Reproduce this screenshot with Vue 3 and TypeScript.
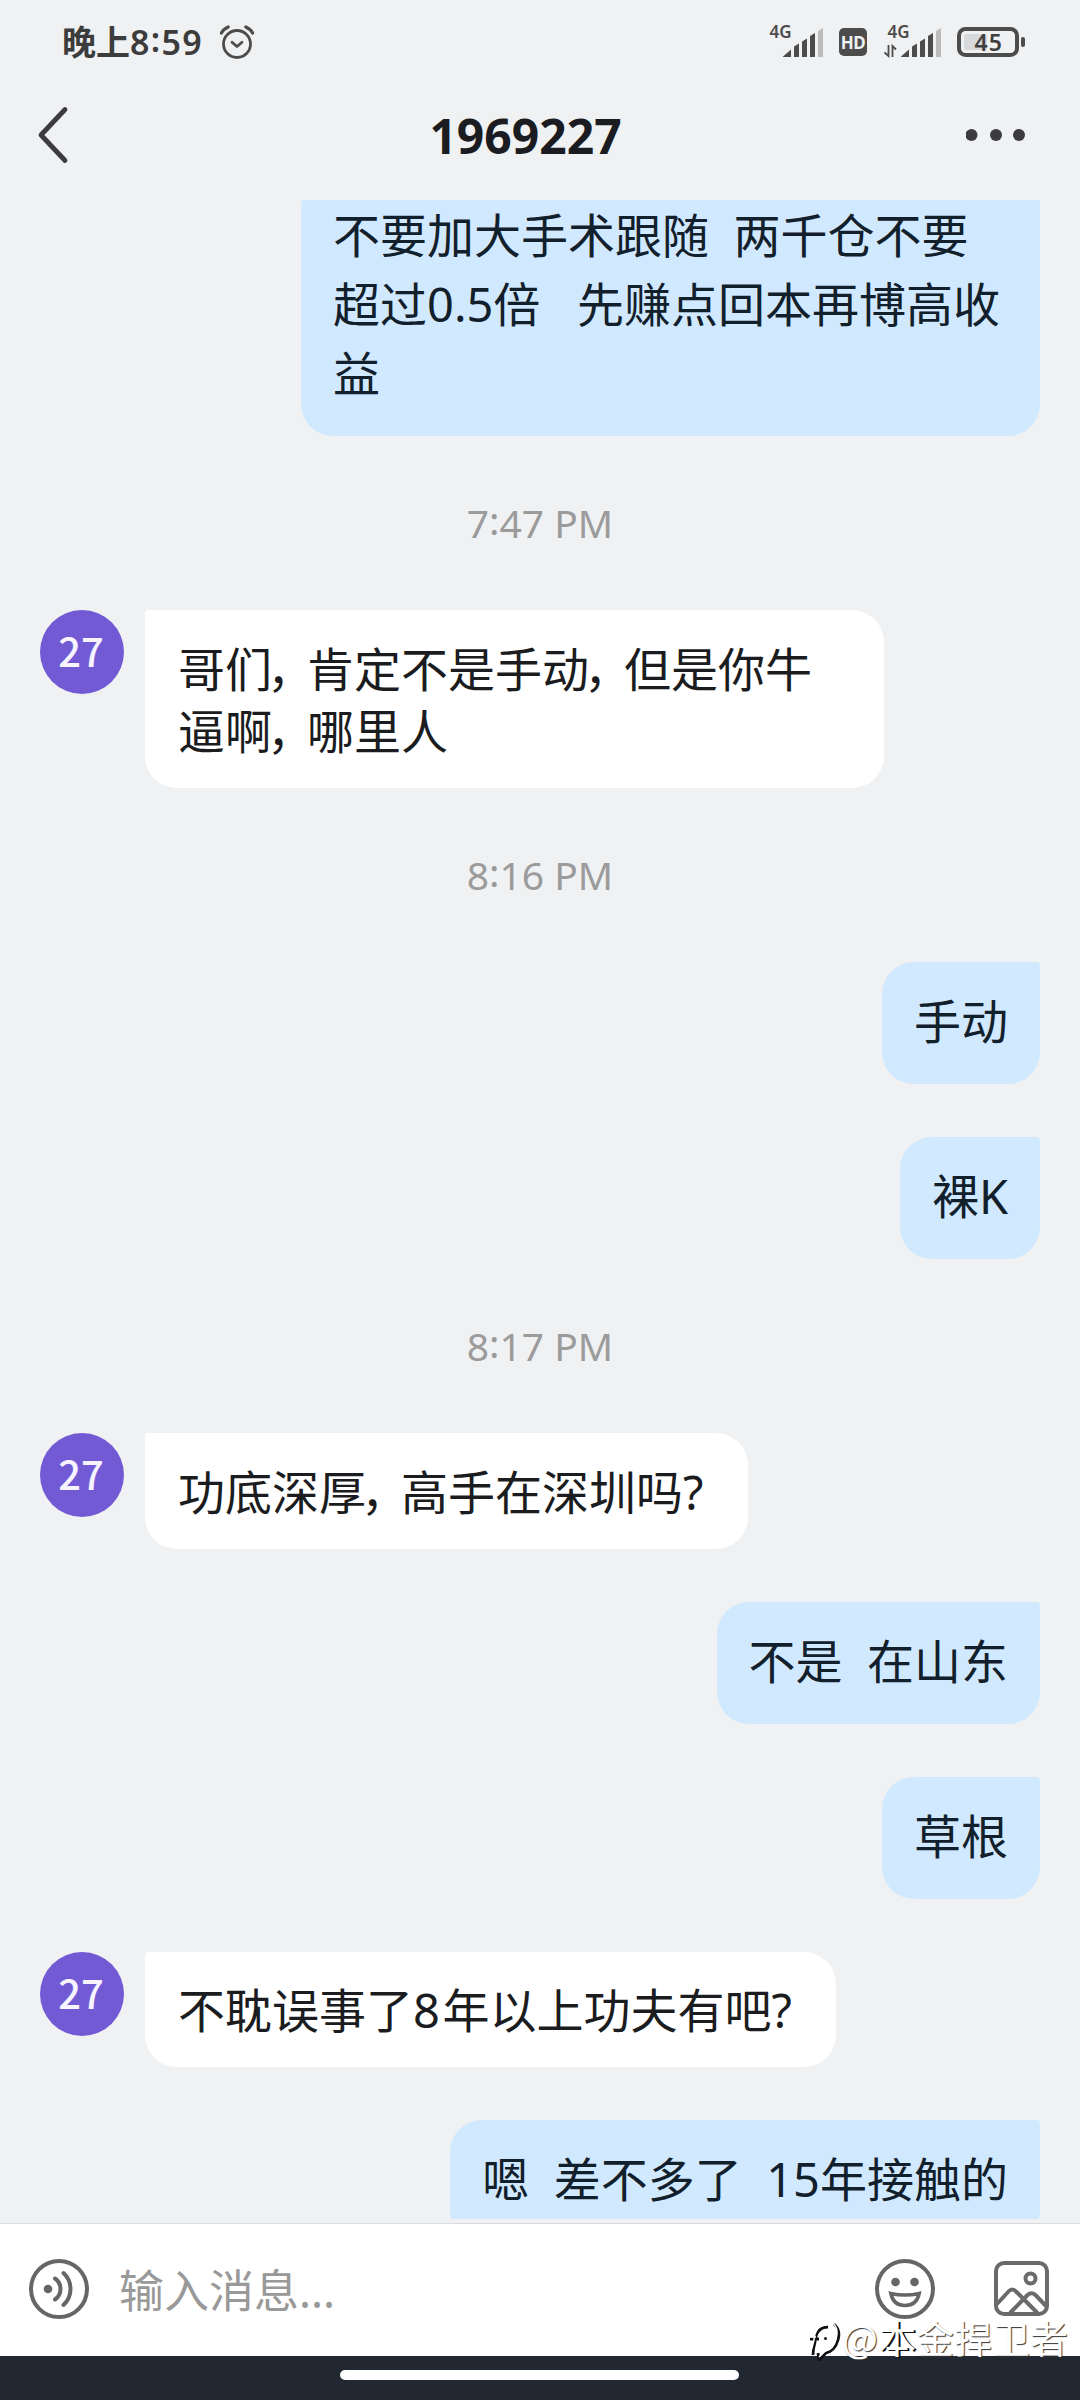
<script setup lang="ts">
interface Message {
  kind: 'sent' | 'received'
  text: string
  first?: boolean
  full?: boolean
}
interface Stamp {
  kind: 'time'
  hour: string
  rest: string
}
type Row = Message | Stamp

const rows: Row[] = [
  { kind: 'sent', first: true, full: true, text: '不要加大手术跟随  两千仓不要\n超过0.5倍   先赚点回本再博高收\n益' },
  { kind: 'time', hour: '7', rest: '47 PM' },
  { kind: 'received', full: true, text: '哥们\uff0c肯定不是手动\uff0c但是你牛\n逼啊\uff0c哪里人' },
  { kind: 'time', hour: '8', rest: '16 PM' },
  { kind: 'sent', text: '手动' },
  { kind: 'sent', text: '裸K' },
  { kind: 'time', hour: '8', rest: '17 PM' },
  { kind: 'received', text: '功底深厚\uff0c高手在深圳吗?' },
  { kind: 'sent', text: '不是  在山东' },
  { kind: 'sent', text: '草根' },
  { kind: 'received', text: '不耽误事了8年以上功夫有吧?' },
  { kind: 'sent', text: '嗯  差不多了  15年接触的' },
]

// Some marks take a width of their own, so the text is split around them.
const pieces = (text: string): string[] => text.split(/(\uff0c|\?|8)/).filter(Boolean)
const marks: Record<string, string> = { '\uff0c': 'comma', '?': 'question', '8': 'digit' }
</script>

<template>
  <div class="screen">
    <header class="status">
      <span class="clock">晚上<span class="digits">8<span class="colon">:</span>59</span></span>
      <svg class="alarm" width="36" height="36" viewBox="0 0 36 36" fill="none" stroke="#4c4c4c" stroke-linecap="round">
        <circle cx="18" cy="20" r="13.5" stroke-width="2.8" />
        <path d="M13 18.2l5 4.3 5-4.3" stroke-width="2.8" stroke-linejoin="round" />
        <path d="M2.4 9Q4.6 5 9.2 3M33.6 9Q31.4 5 26.8 3" stroke-width="3.2" />
      </svg>
      <div class="indicators">
        <svg width="56" height="46" viewBox="0 -6 56 46" class="net">
          <text x="0.5" y="13" class="net-label">4G</text>
          <path d="M14 31.5L22 24.5V32H14Z M25 21.500L30 18.500V32H25Z M33 16.500L38 13.500V32H33Z M41 11L46 8V32H41Z" fill="#4c4c4c" />
          <path d="M49 6L54 3V32H49Z" fill="#bcbcbd" />
        </svg>
        <span class="hd">HD</span>
        <svg width="60" height="46" viewBox="0 -6 60 46" class="net second">
          <text x="4.500" y="13" class="net-label">4G</text>
          <path d="M5.500 20V31L1.500 27.500M9.500 32V21L13 24.500" fill="none" stroke="#4c4c4c" stroke-width="1.8" />
          <path d="M18 31.5L26 24.5V32H18Z M29 21.500L34 18.500V32H29Z M37 16.500L42 13.500V32H37Z M45 11L50 8V32H45Z" fill="#4c4c4c" />
          <path d="M53 6L58 3V32H53Z" fill="#bcbcbd" />
        </svg>
        <svg width="70" height="32" viewBox="0 0 70 32" class="battery">
          <rect x="2" y="3" width="58" height="26" rx="6.500" fill="none" stroke="#4c4c4c" stroke-width="4" />
          <rect x="7" y="8" width="23" height="16" rx="2" fill="#d8d9da" />
          <rect x="64" y="11" width="4" height="10" rx="2" fill="#4c4c4c" />
          <text x="17.500" y="24.500" class="level">45</text>
        </svg>
      </div>
    </header>

    <nav class="titlebar">
      <svg width="32" height="60" viewBox="0 0 32 60" fill="none" stroke="#3c3c3e" stroke-width="4.800" stroke-linecap="round" stroke-linejoin="round">
        <path d="M28 4.500L4 30l24 25.500" />
      </svg>
      <h1>1969227</h1>
      <svg width="60" height="14" viewBox="0 0 60 14" fill="#3c3c3e">
        <circle cx="5.500" cy="7" r="6" /><circle cx="30" cy="7" r="6" /><circle cx="53" cy="7" r="6" />
      </svg>
    </nav>

    <main class="chat">
      <template v-for="(row, i) in rows" :key="i">
        <div v-if="row.kind === 'time'" class="time">{{ row.hour }}<span class="colon">:</span>{{ row.rest }}</div>
        <div v-else class="row" :class="[row.kind, { first: row.first, full: row.full }]">
          <span v-if="row.kind === 'received'" class="avatar">27</span>
          <div class="bubble"><template v-for="(piece, j) in pieces(row.text)" :key="j"><span v-if="marks[piece]" :class="marks[piece]">{{ piece }}</span><template v-else>{{ piece }}</template></template></div>
        </div>
      </template>
    </main>

    <footer class="composer">
      <svg width="60" height="60" viewBox="0 0 60 60" fill="none" stroke="#666" stroke-width="4" stroke-linecap="round">
        <circle cx="30" cy="30" r="28" />
        <circle cx="19" cy="30" r="4.300" fill="#666" stroke="none" />
        <path d="M26 19.500A12.800 12.800 0 0 1 26 40.500M34.500 14A21.800 21.800 0 0 1 34.500 46" />
      </svg>
      <span class="placeholder">输入消息...</span>
      <svg width="60" height="60" viewBox="0 0 60 60" fill="none" stroke="#666" stroke-width="4">
        <circle cx="30" cy="30" r="28" />
        <circle cx="20.500" cy="23" r="4.300" fill="#666" stroke="none" />
        <circle cx="39.500" cy="23" r="4.300" fill="#666" stroke="none" />
        <path d="M15.800 34.400Q30 37.500 44.200 34.400C42.500 42.500 37 46.500 30 46.500S17.500 42.500 15.800 34.400Z" stroke-width="3.600" />
      </svg>
      <svg class="photo" width="56" height="56" viewBox="0 0 56 56" fill="none" stroke="#6a6a6a" stroke-width="4">
        <rect x="2" y="2" width="51" height="51" rx="8" />
        <circle cx="36.500" cy="17.500" r="5" />
        <path d="M3 43L14.500 30.500Q18.300 26.500 22 30.500L43.500 52M16 52L33.500 34Q37.500 30.500 41.500 34L52 45" />
      </svg>
    </footer>

    <div class="gesture"><span class="pill"></span></div>

    <div class="watermark">
      <svg width="34" height="46" viewBox="0 0 34 46" fill="none">
        <path d="M26 9Q31 13 30 23Q28 35 18 38L12 43V36L16 12H22Z" fill="#fff" />
        <path d="M2 24H11M5 40Q5 34 7 27Q8 12 20 12M26 9Q33 15 30 25Q27 36 18 38L11 45L10 38" stroke="#111" stroke-width="2.800" />
        <path d="M1 22H8M2 39Q4 33 6 25Q7 10 19 10M25 8Q31 13 28 23Q26 34 17 36L11 42" stroke="#fff" stroke-width="1.500" />
        <circle cx="17.500" cy="23.500" r="1.500" fill="#111" />
      </svg>
      <span>@<span class="dark">本</span>金捍卫者</span>
    </div>
  </div>
</template>

<style>
body {
  margin: 0;
  background: #eff1f3;
}
</style>

<style scoped>
.screen {
  position: relative;
  width: 1080px;
  height: 2400px;
  overflow: hidden;
  display: flex;
  flex-direction: column;
  background: #eff1f3;
  font-family: "Noto Sans", "Noto Sans CJK SC", sans-serif;
}
svg {
  display: block;
  flex: none;
}
.status {
  height: 84px;
  flex: none;
  display: flex;
  align-items: center;
  box-sizing: border-box;
  padding: 0 53px 0 62px;
  color: #3c3c3c;
}
.clock {
  width: 157px;
  font-size: 34px;
  line-height: 50px;
  font-weight: 600;
  white-space: nowrap;
}
.digits {
  letter-spacing: 1.300px;
}
.colon {
  position: relative;
  top: -3px;
}
.indicators {
  margin-left: auto;
  display: flex;
  align-items: center;
}
.net-label {
  font: 600 17px "Noto Sans", sans-serif;
  fill: #4c4c4c;
}
.hd {
  width: 28px;
  height: 28px;
  margin-left: 14px;
  border-radius: 5px;
  background: #4c4c4c;
  color: #eff1f3;
  font-size: 17px;
  line-height: 29px;
  font-weight: 700;
  text-align: center;
  letter-spacing: -0.5px;
}
.second {
  margin-left: 16px;
}
.battery {
  margin-left: 14px;
}
.level {
  font: 600 23px "Noto Sans", sans-serif;
  fill: #3f3f3f;
  letter-spacing: 1px;
}
.titlebar {
  height: 116px;
  flex: none;
  box-sizing: border-box;
  padding: 0 54px 14px 37px;
  display: flex;
  align-items: center;
  justify-content: space-between;
}
.titlebar h1 {
  margin: 2px 0 0 16px;
  font-size: 48px;
  line-height: 60px;
  font-weight: 700;
  color: #1a1c21;
}
.chat {
  height: 2019px;
  flex: none;
  overflow: hidden;
  display: flex;
  flex-direction: column;
}
.row {
  display: flex;
  flex: none;
  margin-bottom: 53px;
}
.row.first {
  margin-top: -24px;
}
.sent {
  justify-content: flex-end;
  padding-right: 40px;
}
.received {
  padding-left: 40px;
  gap: 21px;
}
.bubble {
  box-sizing: border-box;
  font-size: 47px;
  white-space: pre;
}
.full .bubble {
  width: 739px;
}
.sent .bubble {
  padding: 25px 32px 28px;
  line-height: 69px;
  border-radius: 32px 4px 32px 32px;
  background: #d1e9ff;
  color: #12202c;
}
.received .bubble {
  padding: 27.500px 32px 25.500px 33px;
  line-height: 62.500px;
  border-radius: 4px 32px 32px 32px;
  background: #fff;
  color: #1a1c20;
}
.comma {
  position: relative;
  left: -5px;
  letter-spacing: -12px;
}
.question {
  letter-spacing: 12.600px;
}
.received .digit {
  letter-spacing: 2.500px;
}
.avatar {
  width: 84px;
  height: 84px;
  flex: none;
  border-radius: 50%;
  background: #735ad5;
  color: #f7f4ff;
  font-family: "Noto Sans CJK SC", sans-serif;
  font-weight: 500;
  font-size: 40px;
  line-height: 81px;
  text-align: center;
  text-indent: -2px;
}
.time {
  height: 68px;
  flex: none;
  margin-bottom: 53px;
  font-size: 39px;
  line-height: 68px;
  text-align: center;
  color: #9b9b9b;
}
.composer {
  height: 132px;
  flex: none;
  margin-top: 5px;
  box-sizing: border-box;
  padding: 0 30px 3px 29px;
  display: flex;
  align-items: center;
  background: #fff;
  box-shadow: 0 -1px #d9dbdf;
}
.placeholder {
  flex: 1;
  padding: 4px 0 0 30px;
  font-size: 45px;
  line-height: 64px;
  color: #999;
}
.photo {
  margin-left: 59px;
}
.gesture {
  height: 44px;
  flex: none;
  box-sizing: border-box;
  padding: 14px 2px 0 0;
  display: flex;
  justify-content: center;
  background: #222831;
}
.pill {
  width: 399px;
  height: 10px;
  border-radius: 5px;
  background: #fff;
}
.watermark {
  position: absolute;
  left: 808px;
  top: 2315px;
  display: flex;
  align-items: center;
  font-size: 38px;
  line-height: 44px;
  white-space: nowrap;
  color: #fff;
  font-family: "Noto Sans CJK SC", sans-serif;
  text-shadow: 1px 1px 1px #333;
}
.watermark span {
  margin-top: -3px;
}
.dark {
  text-shadow: 2px 1px 0 #111;
}
</style>
